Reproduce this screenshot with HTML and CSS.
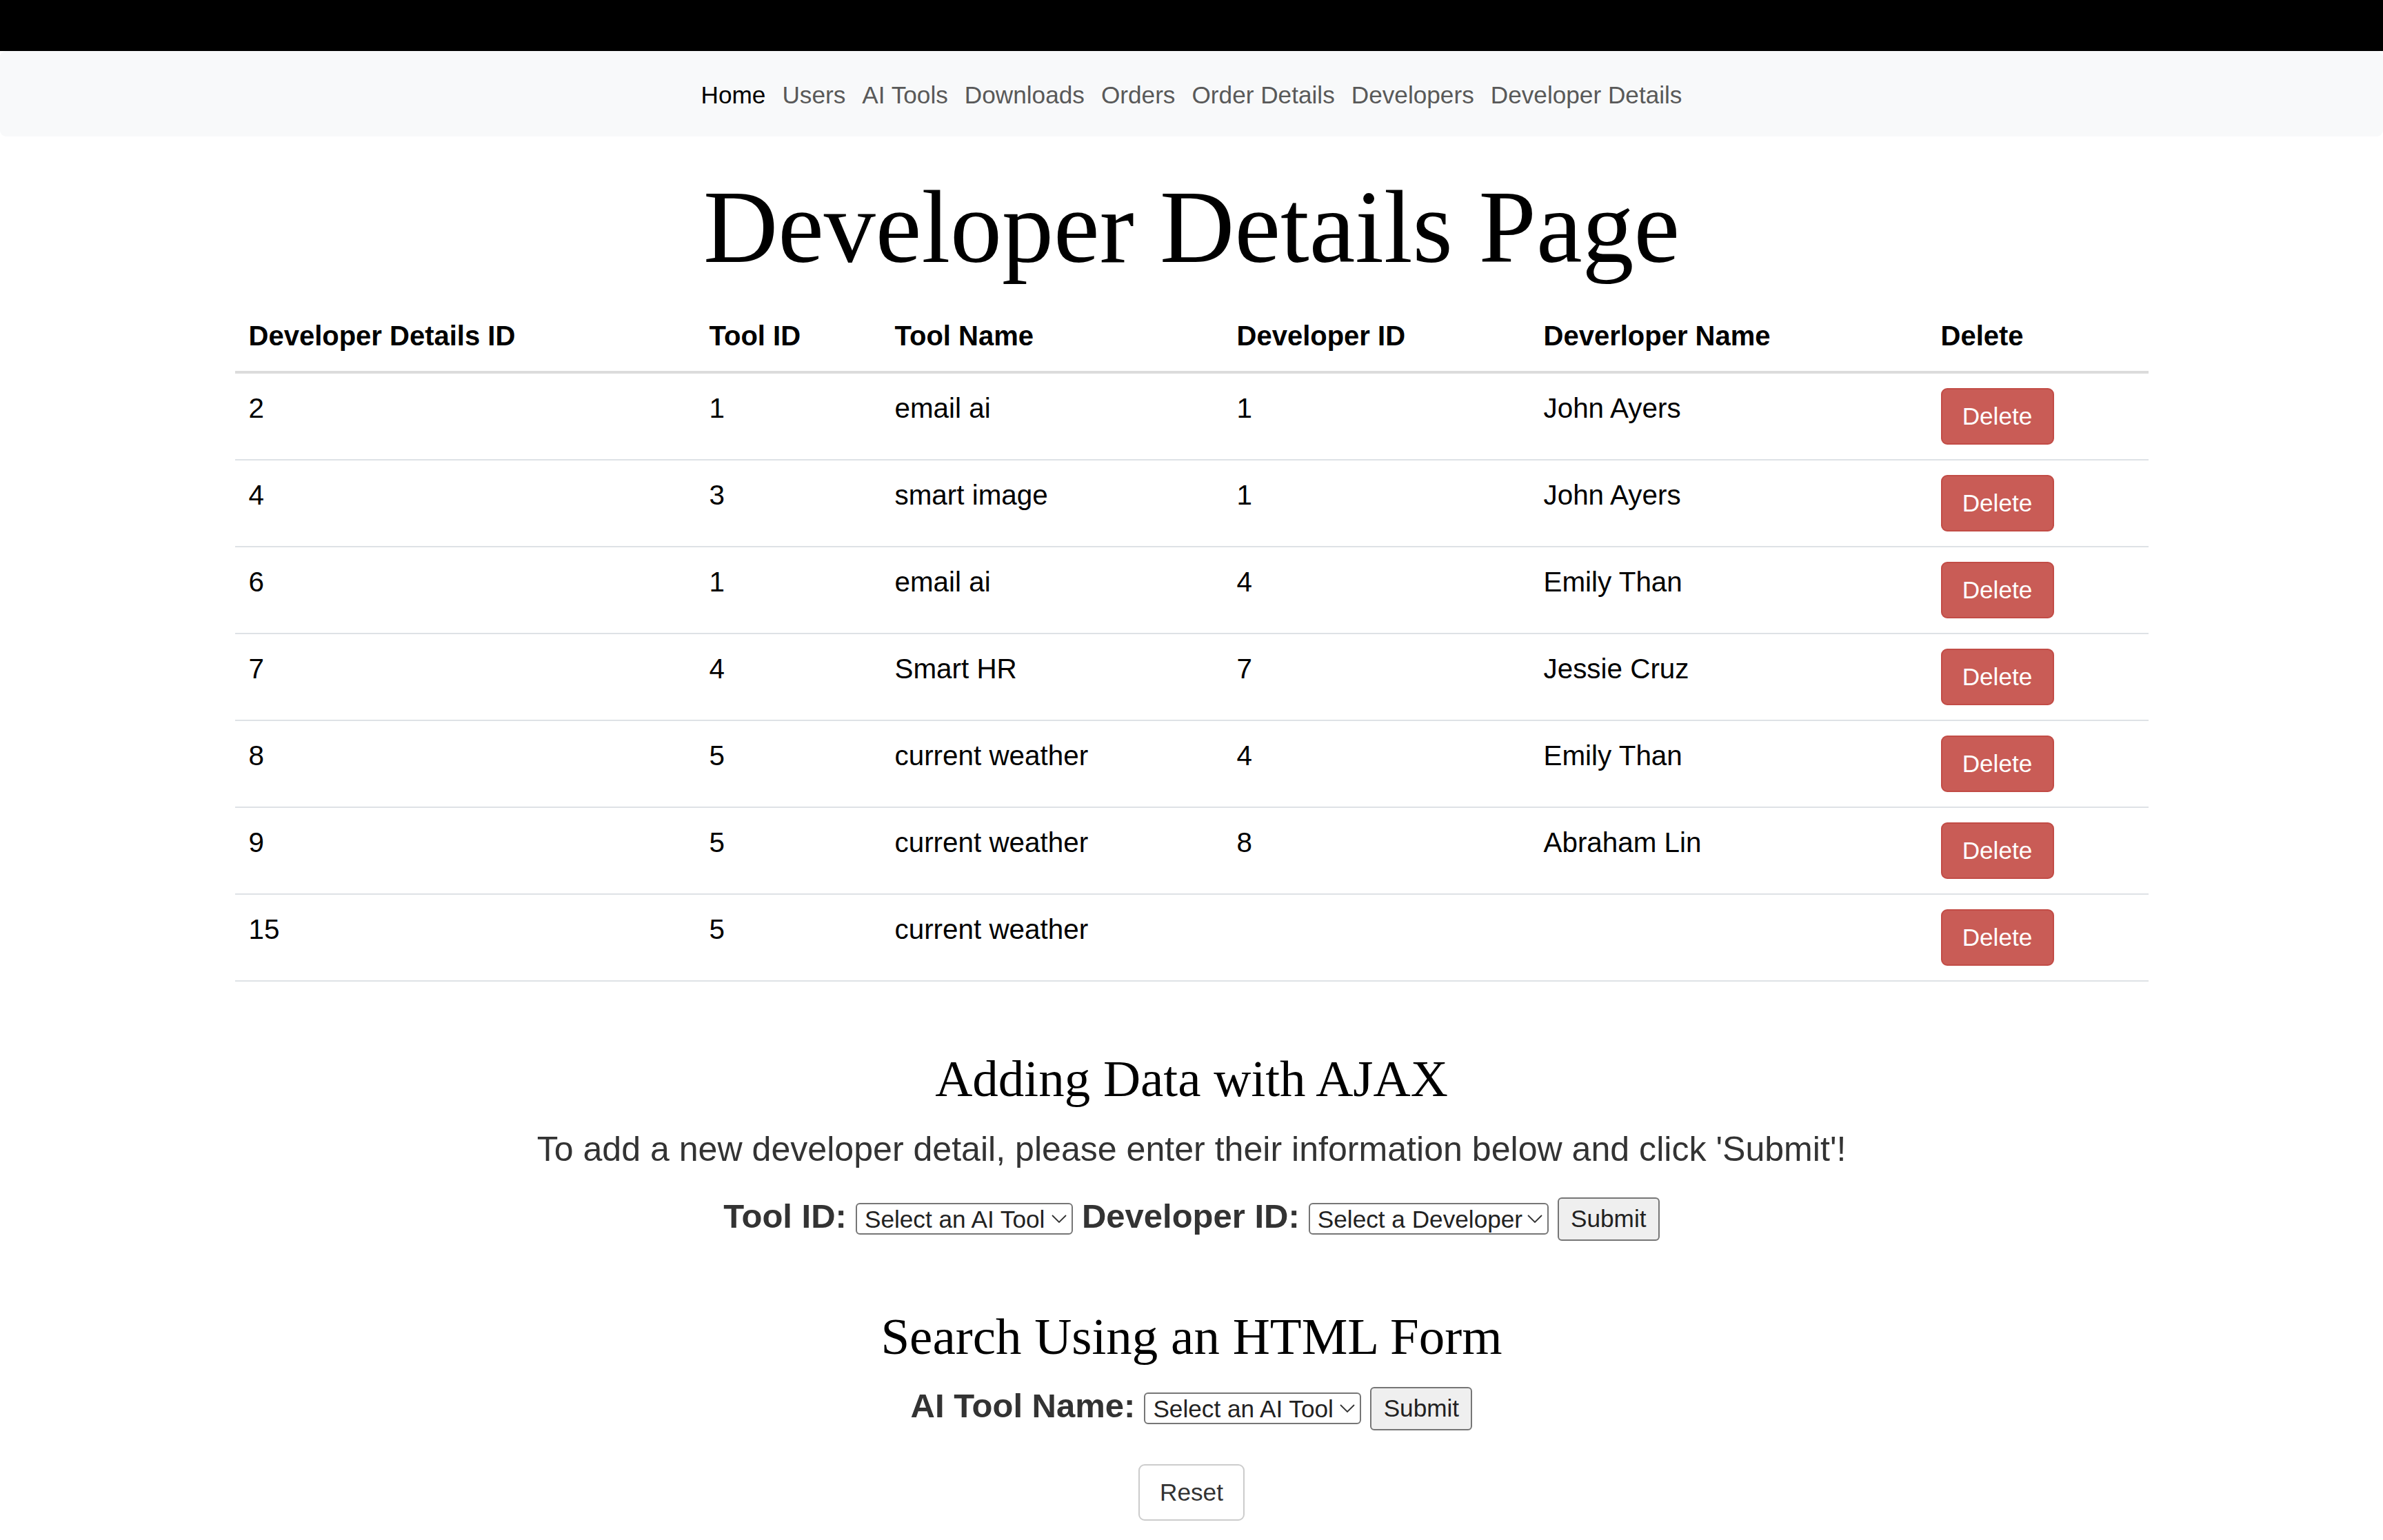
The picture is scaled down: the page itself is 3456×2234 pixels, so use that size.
FILE: index.html
```html
<!DOCTYPE html>
<html lang="en">
<head>
<meta charset="utf-8">
<title>Developer Details Page</title>
<link rel="stylesheet" href="styles.css">
</head>
<body>
<div class="topbar"></div>
<nav class="navbar">
  <a class="nav-link active" href="#">Home</a>
  <a class="nav-link" href="#">Users</a>
  <a class="nav-link" href="#">AI Tools</a>
  <a class="nav-link" href="#">Downloads</a>
  <a class="nav-link" href="#">Orders</a>
  <a class="nav-link" href="#">Order Details</a>
  <a class="nav-link" href="#">Developers</a>
  <a class="nav-link" href="#">Developer Details</a>
</nav>
<main class="container">
  <h1 class="page-title">Developer Details Page</h1>
  <table class="data-table">
    <colgroup>
      <col class="c1"><col class="c2"><col class="c3"><col class="c4"><col class="c5"><col class="c6">
    </colgroup>
    <thead>
      <tr>
        <th>Developer Details ID</th>
        <th>Tool ID</th>
        <th>Tool Name</th>
        <th>Developer ID</th>
        <th>Deverloper Name</th>
        <th>Delete</th>
      </tr>
    </thead>
    <tbody>
      <tr><td>2</td><td>1</td><td>email ai</td><td>1</td><td>John Ayers</td><td><button class="btn-delete">Delete</button></td></tr>
      <tr><td>4</td><td>3</td><td>smart image</td><td>1</td><td>John Ayers</td><td><button class="btn-delete">Delete</button></td></tr>
      <tr><td>6</td><td>1</td><td>email ai</td><td>4</td><td>Emily Than</td><td><button class="btn-delete">Delete</button></td></tr>
      <tr><td>7</td><td>4</td><td>Smart HR</td><td>7</td><td>Jessie Cruz</td><td><button class="btn-delete">Delete</button></td></tr>
      <tr><td>8</td><td>5</td><td>current weather</td><td>4</td><td>Emily Than</td><td><button class="btn-delete">Delete</button></td></tr>
      <tr><td>9</td><td>5</td><td>current weather</td><td>8</td><td>Abraham Lin</td><td><button class="btn-delete">Delete</button></td></tr>
      <tr><td>15</td><td>5</td><td>current weather</td><td></td><td></td><td><button class="btn-delete">Delete</button></td></tr>
    </tbody>
  </table>

  <h2 class="section-title add-title">Adding Data with AJAX</h2>
  <p class="intro">To add a new developer detail, please enter their information below and click 'Submit'!</p>
  <form class="form-row add-form">
    <label class="form-label" for="toolId">Tool ID:</label>
    <span class="select-wrap">
      <select id="toolId" class="select"><option>Select an AI Tool</option></select>
      <svg class="chev" viewBox="0 0 22 12"><polyline points="1,1 11,11 21,1"/></svg>
    </span>
    <label class="form-label" for="devId">Developer ID:</label>
    <span class="select-wrap">
      <select id="devId" class="select wide"><option>Select a Developer</option></select>
      <svg class="chev" viewBox="0 0 22 12"><polyline points="1,1 11,11 21,1"/></svg>
    </span>
    <button type="submit" class="btn-submit">Submit</button>
  </form>

  <h2 class="section-title search-title">Search Using an HTML Form</h2>
  <form class="form-row search-form">
    <label class="form-label" for="toolName">AI Tool Name:</label>
    <span class="select-wrap">
      <select id="toolName" class="select"><option>Select an AI Tool</option></select>
      <svg class="chev" viewBox="0 0 22 12"><polyline points="1,1 11,11 21,1"/></svg>
    </span>
    <button type="submit" class="btn-submit">Submit</button>
  </form>
  <button class="btn-reset">Reset</button>
</main>
</body>
</html>
```
FILE: styles.css
```css
html, body {
  margin: 0;
  padding: 0;
  background: #fff;
}

body {
  font-family: "Liberation Sans", Arial, Helvetica, sans-serif;
  color: #000;
}

.topbar {
  height: 74px;
  background: #000;
}

.navbar {
  box-sizing: border-box;
  height: 124px;
  padding-top: 3px;
  background: #f8f9fa;
  border-radius: 9px;
  display: flex;
  justify-content: center;
  align-items: center;
}

.nav-link {
  font-size: 35.2px;
  color: #595959;
  text-decoration: none;
  padding: 0 12px;
}

.nav-link.active {
  color: #000;
}

.container {
  width: 2775px;
  margin: 0 auto;
}

.page-title {
  font-family: "Liberation Serif", "Times New Roman", serif;
  font-weight: 400;
  font-size: 150px;
  line-height: 180px;
  text-align: center;
  margin: 41px 0 20px;
}

.data-table {
  width: 100%;
  border-collapse: collapse;
  table-layout: fixed;
  font-size: 40.4px;
  line-height: 59.4px;
}

.c1 { width: 668px; }
.c2 { width: 269px; }
.c3 { width: 496px; }
.c4 { width: 445px; }
.c5 { width: 576px; }
.c6 { width: 321px; }

.data-table th {
  text-align: left;
  font-weight: 700;
  font-size: 40px;
  padding: 19px 20px 21px;
  border-bottom: 4px solid #dcdcdc;
  vertical-align: bottom;
}

.data-table td {
  padding: 21px 20px;
  border-bottom: 2px solid #dee2e6;
  vertical-align: top;
}

.btn-delete {
  display: flex;
  align-items: center;
  justify-content: center;
  box-sizing: border-box;
  width: 164px;
  height: 82px;
  padding: 0;
  background: #c95c56;
  border: 2px solid #c24c46;
  border-radius: 9px;
  color: #fff;
  font-family: "Liberation Sans", Arial, sans-serif;
  font-size: 35.2px;
}

.section-title {
  font-family: "Liberation Serif", "Times New Roman", serif;
  font-weight: 400;
  font-size: 75px;
  line-height: 89px;
  text-align: center;
  margin: 0;
}

.add-title {
  margin-top: 96px;
}

.search-title {
  margin-top: 94px;
}

.intro {
  font-size: 50.1px;
  line-height: 74px;
  color: #333;
  text-align: center;
  margin: 21px 0 0;
}

.form-row {
  display: flex;
  justify-content: center;
  align-items: center;
  gap: 13px;
}

.add-form {
  margin-top: 32px;
}

.search-form {
  margin-top: 28px;
}

.form-label {
  font-weight: 700;
  font-size: 49px;
  line-height: 56px;
  color: #333;
  padding-bottom: 8px;
}

.select-wrap {
  position: relative;
  display: block;
}

.select {
  -webkit-appearance: none;
  appearance: none;
  display: block;
  box-sizing: border-box;
  width: 315px;
  height: 46px;
  margin: 0;
  padding: 0 28px 0 11px;
  border: 2px solid #767676;
  border-radius: 6px;
  background: #fff;
  font-family: "Liberation Sans", Arial, sans-serif;
  font-size: 35.2px;
  color: #222;
}

.select.wide {
  width: 348px;
}

.chev {
  position: absolute;
  right: 9px;
  top: 17px;
  width: 22px;
  height: 12px;
  pointer-events: none;
}

.chev polyline {
  fill: none;
  stroke: #333;
  stroke-width: 1.8;
}

.btn-submit {
  box-sizing: border-box;
  width: 148px;
  height: 63px;
  padding: 0;
  background: #efefef;
  border: 2px solid #767676;
  border-radius: 6px;
  font-family: "Liberation Sans", Arial, sans-serif;
  font-size: 35.2px;
  color: #222;
}

.btn-reset {
  display: block;
  box-sizing: border-box;
  width: 154px;
  height: 82px;
  margin: 49px auto 0;
  padding: 0;
  background: #fff;
  border: 2px solid #ccc;
  border-radius: 9px;
  font-family: "Liberation Sans", Arial, sans-serif;
  font-size: 35.2px;
  color: #333;
}
```
